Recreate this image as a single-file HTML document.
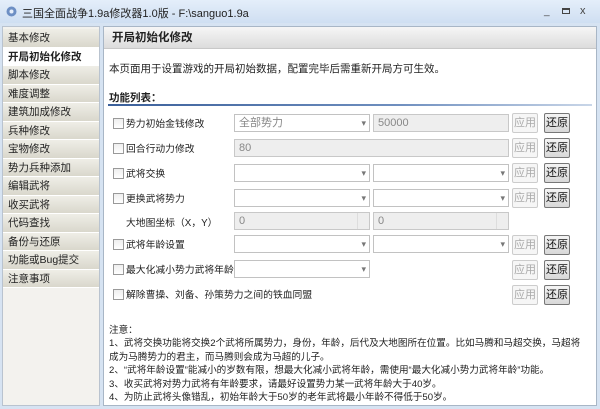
<!DOCTYPE html>
<html><head><meta charset="utf-8"><style>
*{margin:0;padding:0;box-sizing:border-box}
body{width:600px;height:409px;overflow:hidden;background:#d6e3f2;font-family:"Liberation Sans","Noto Sans CJK SC",sans-serif;font-size:11px;color:#222;position:relative}
.abs{position:absolute}
.title{left:0;top:0;width:600px;height:23px;background:linear-gradient(#e4eefa,#cfdff2);}
.title .t{left:22px;top:5px;font-size:11px;color:#222}
.side{left:2px;top:26px;width:98px;height:380px;background:#f3f2ee;border:1px solid #b9c3cf}
.item{position:absolute;left:0;width:96px;height:18.5px;background:linear-gradient(#efeee7,#d9d7cc);border-bottom:1px solid #fff;padding-left:5px;line-height:18px;font-size:10.5px;color:#222}
.item.sel{background:#fff;font-weight:bold}
.main{left:103px;top:26px;width:494px;height:380px;background:#fff;border:1px solid #a8b6c6}
.hdr{left:0;top:0;width:492px;height:22px;background:linear-gradient(#f6f6f6,#dcdcdc);font-weight:bold;font-size:11.5px;padding-left:8px;line-height:22px;border-bottom:1px solid #c8c8c8}
.cb{width:11px;height:11px;border:1px solid #999;background:linear-gradient(#eee,#fff)}
.lbl{font-size:9.8px}
.combo{height:18px;border:1px solid #c2c2c2;background:#fff;font-size:11px;color:#888;padding-left:4px;line-height:16px}
.combo:after{content:"▾";position:absolute;right:3px;top:0;color:#777;font-size:9px}
.txt{height:18px;border:1px solid #c8c8c8;background:#eee;color:#888;padding-left:4px;line-height:16px}
.spin{height:18px;border:1px solid #c8c8c8;background:#eee;color:#888;padding-left:4px;line-height:16px}
.spin:after{content:"";position:absolute;right:0;top:0;width:11px;height:16px;border-left:1px solid #ddd}
.b1{width:26px;height:20px;border:1px solid #ccc;background:#f6f6f6;color:#aaa;text-align:center;line-height:18px;border-radius:2px}
.b2{width:26px;height:20px;border:1px solid #777;background:linear-gradient(#f4f4f4,#d8d8d8);color:#111;text-align:center;line-height:18px;border-radius:2px}
.notes{left:5px;top:297px;font-size:9.6px;line-height:13.4px;white-space:nowrap}
</style></head><body>
<div class="abs title"><svg class="abs" style="left:5px;top:5px" width="13" height="13" viewBox="0 0 13 13"><circle cx="6.5" cy="6.5" r="5" fill="#6d8fc4"/><circle cx="6.5" cy="6.5" r="2" fill="#e6eefa"/></svg><div class="abs t">三国全面战争1.9a修改器1.0版 - F:\sanguo1.9a</div>
<div class="abs" style="left:544px;top:6px;font-size:10px;color:#444">_</div>
<div class="abs" style="left:562px;top:8px;width:8px;height:6px;border:1px solid #444;border-top-width:2px"></div>
<div class="abs" style="left:580px;top:5px;font-size:11px;color:#444">x</div></div>
<div class="abs side">
<div class="item" style="top:2px">基本修改</div>
<div class="item sel" style="top:20.5px">开局初始化修改</div>
<div class="item" style="top:39px">脚本修改</div>
<div class="item" style="top:57.5px">难度调整</div>
<div class="item" style="top:76px">建筑加成修改</div>
<div class="item" style="top:94.5px">兵种修改</div>
<div class="item" style="top:113px">宝物修改</div>
<div class="item" style="top:131.5px">势力兵种添加</div>
<div class="item" style="top:150px">编辑武将</div>
<div class="item" style="top:168.5px">收买武将</div>
<div class="item" style="top:187px">代码查找</div>
<div class="item" style="top:205.5px">备份与还原</div>
<div class="item" style="top:224px">功能或Bug提交</div>
<div class="item" style="top:242.5px">注意事项</div>
</div>
<div class="abs main">
<div class="abs hdr">开局初始化修改</div>
<div class="abs" style="left:5px;top:34px;font-size:10.5px">本页面用于设置游戏的开局初始数据，配置完毕后需重新开局方可生效。</div>
<div class="abs" style="left:5px;top:63px;font-weight:bold;font-size:10.5px">功能列表：</div>
<div class="abs" style="left:4px;top:77px;width:484px;height:2px;background:linear-gradient(90deg,#3a5f9a,#6f8fbf 60%,#c9d6e8)"></div>

<div class="abs cb" style="left:9px;top:91px"></div><div class="abs lbl" style="left:22px;top:89px">势力初始金钱修改</div>
<div class="abs combo" style="left:130px;top:87px;width:136px">全部势力</div>
<div class="abs txt" style="left:269px;top:87px;width:136px">50000</div>

<div class="abs cb" style="left:9px;top:116px"></div><div class="abs lbl" style="left:22px;top:114px">回合行动力修改</div>
<div class="abs txt" style="left:130px;top:112px;width:275px">80</div>

<div class="abs cb" style="left:9px;top:141px"></div><div class="abs lbl" style="left:22px;top:139px">武将交换</div>
<div class="abs combo" style="left:130px;top:137px;width:136px"></div>
<div class="abs combo" style="left:269px;top:137px;width:136px"></div>

<div class="abs cb" style="left:9px;top:166px"></div><div class="abs lbl" style="left:22px;top:164px">更换武将势力</div>
<div class="abs combo" style="left:130px;top:162px;width:136px"></div>
<div class="abs combo" style="left:269px;top:162px;width:136px"></div>

<div class="abs lbl" style="left:22px;top:188px">大地图坐标（X，Y）</div>
<div class="abs spin" style="left:130px;top:185px;width:136px">0</div>
<div class="abs spin" style="left:269px;top:185px;width:136px">0</div>

<div class="abs cb" style="left:9px;top:212px"></div><div class="abs lbl" style="left:22px;top:210px">武将年龄设置</div>
<div class="abs combo" style="left:130px;top:208px;width:136px"></div>
<div class="abs combo" style="left:269px;top:208px;width:136px"></div>

<div class="abs cb" style="left:9px;top:237px"></div><div class="abs lbl" style="left:22px;top:235px">最大化减小势力武将年龄</div>
<div class="abs combo" style="left:130px;top:233px;width:136px"></div>

<div class="abs cb" style="left:9px;top:262px"></div><div class="abs lbl" style="left:22px;top:260px">解除曹操、刘备、孙策势力之间的铁血同盟</div>

<div class="abs b1" style="left:408px;top:86px">应用</div><div class="abs b2" style="left:440px;top:86px">还原</div>
<div class="abs b1" style="left:408px;top:111px">应用</div><div class="abs b2" style="left:440px;top:111px">还原</div>
<div class="abs b1" style="left:408px;top:136px">应用</div><div class="abs b2" style="left:440px;top:136px">还原</div>
<div class="abs b1" style="left:408px;top:161px">应用</div><div class="abs b2" style="left:440px;top:161px">还原</div>
<div class="abs b1" style="left:408px;top:208px">应用</div><div class="abs b2" style="left:440px;top:208px">还原</div>
<div class="abs b1" style="left:408px;top:233px">应用</div><div class="abs b2" style="left:440px;top:233px">还原</div>
<div class="abs b1" style="left:408px;top:258px">应用</div><div class="abs b2" style="left:440px;top:258px">还原</div>

<div class="abs notes">注意：<br>1、武将交换功能将交换2个武将所属势力，身份，年龄，后代及大地图所在位置。比如马腾和马超交换，马超将<br>成为马腾势力的君主，而马腾则会成为马超的儿子。<br>2、“武将年龄设置”能减小的岁数有限，想最大化减小武将年龄，需使用“最大化减小势力武将年龄”功能。<br>3、收买武将对势力武将有年龄要求，请最好设置势力某一武将年龄大于40岁。<br>4、为防止武将头像错乱，初始年龄大于50岁的老年武将最小年龄不得低于50岁。</div>
</div>
</body></html>
